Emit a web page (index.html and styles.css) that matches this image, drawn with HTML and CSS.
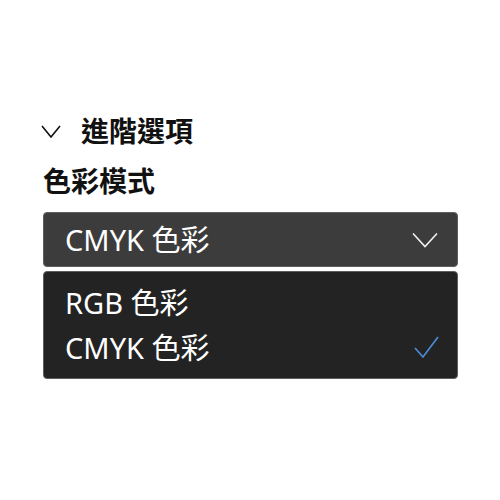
FILE: index.html
```html
<!DOCTYPE html>
<html lang="zh-Hant">
<head>
<meta charset="utf-8">
<title>進階選項</title>
<link rel="stylesheet" href="styles.css">
</head>
<body>
<div class="panel">
  <div class="section-head">
    <svg class="head-chevron" width="20" height="13" viewBox="0 0 20 13"><polyline points="1,1 10,12 19,1" fill="none" stroke="#111" stroke-width="1.6"/></svg>
    <span class="section-title">進階選項</span>
  </div>
  <div class="field-label">色彩模式</div>
  <div class="select">
    <span class="select-value">CMYK 色彩</span>
    <svg class="select-chevron" width="26" height="16" viewBox="0 0 26 16"><polyline points="1,1.5 13,14.5 25,1.5" fill="none" stroke="#f2f2f2" stroke-width="1.6"/></svg>
  </div>
  <ul class="options">
    <li class="option">RGB 色彩</li>
    <li class="option selected">CMYK 色彩
      <svg class="check" width="26" height="24" viewBox="0 0 26 24"><polyline points="1,12 9,21 24,1" fill="none" stroke="#4a8bd6" stroke-width="1.7"/></svg>
    </li>
  </ul>
</div>
</body>
</html>
```

FILE: styles.css
```css
html, body {
  margin: 0;
  padding: 0;
  background: #ffffff;
}

body {
  font-family: "Noto Sans", "Noto Sans CJK TC", sans-serif;
  width: 500px;
  height: 500px;
}

.panel {
  box-sizing: border-box;
  width: 500px;
  padding: 112px 42px 0 43px;
}

.section-head {
  display: flex;
  align-items: center;
  gap: 20px;
  height: 38px;
  margin-left: -2px;
}

.head-chevron {
  display: block;
  flex: none;
}

.section-title {
  font-size: 28px;
  font-weight: 700;
  color: #111;
  line-height: 38px;
}

.field-label {
  margin-top: 12px;
  font-size: 28px;
  font-weight: 700;
  color: #111;
  line-height: 38px;
  height: 38px;
}

.select {
  box-sizing: border-box;
  margin-top: 12px;
  height: 55px;
  background: #3c3c3c;
  border: 1px solid #5e5e5e;
  border-radius: 4px;
  display: flex;
  align-items: center;
  justify-content: space-between;
  padding: 0 19px 0 21px;
}

.select-value {
  font-size: 29px;
  color: #ffffff;
  line-height: 40px;
}

.select-chevron {
  display: block;
  flex: none;
}

.options {
  box-sizing: border-box;
  list-style: none;
  margin: 4px 0 0 0;
  height: 108px;
  background: #232323;
  border: 1px solid #5e5e5e;
  border-radius: 4px;
  padding: 8px 17px 0 21px;
}

.option {
  height: 45px;
  display: flex;
  align-items: center;
  justify-content: space-between;
  font-size: 29px;
  color: #ffffff;
  line-height: 40px;
}

.check {
  display: block;
  flex: none;
}
```
